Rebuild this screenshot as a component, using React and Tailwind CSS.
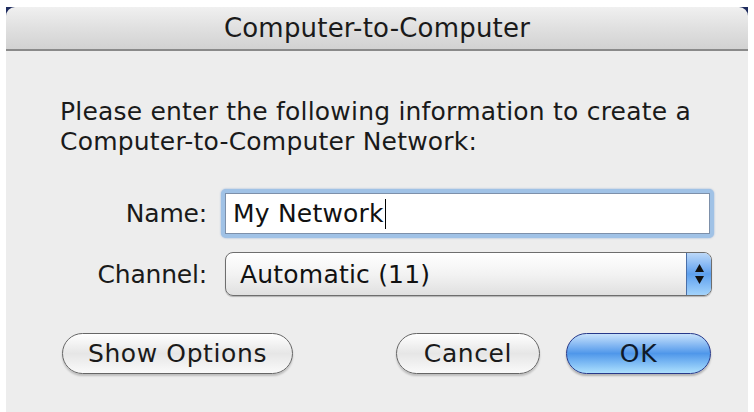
export default function App() {
  const font = { fontFamily: '"DejaVu Sans", "Liberation Sans", sans-serif' };

  return (
    <div className="w-[754px] h-[412px] bg-white overflow-hidden" style={font}>
      <div className="ml-[6px] mt-[7px] w-[742px] h-[405px] bg-[#1d2b5e] flex flex-col">
        {/* title bar */}
        <div className="h-[44px] rounded-t-[9px] bg-gradient-to-b from-[#f0f0f0] via-[#e0e0e0] to-[#d2d2d2] border-b-2 border-[#8a8a8a] flex items-center justify-center">
          <span className="text-[26px] leading-[30px] text-[#1a1a1a] tracking-[0.2px]">Computer-to-Computer</span>
        </div>

        <div className="flex-1 bg-[#ededed] pl-[54px] pt-[46px]">
          <p className="text-[25px] leading-[30px] text-[#1a1a1a] tracking-[0.2px]">
            Please enter the following information to create a
            <br />
            Computer-to-Computer Network:
          </p>

          <div className="mt-[32px] flex items-center">
            <div className="w-[147px] text-right text-[25px] leading-[29px] text-[#1a1a1a] tracking-[-0.2px]">Name:</div>
            <div className="ml-[14px] w-[493px] h-[49px] rounded-[5px] bg-[#a0c2e6] p-[4px] flex shadow-[0_0_2px_rgba(80,130,200,0.6)]">
              <div className="flex-1 bg-white border border-[#7d90aa] flex items-center pl-[7px]">
                <span className="text-[25px] leading-[29px] text-[#111] tracking-[0.2px]">My Network</span>
                <span className="ml-[1px] w-[1px] h-[30px] bg-black" />
              </div>
            </div>
          </div>

          <div className="mt-[14px] flex items-center">
            <div className="w-[147px] text-right text-[25px] leading-[29px] text-[#1a1a1a] tracking-[-0.2px]">Channel:</div>
            <div className="ml-[18px] w-[487px] h-[44px] rounded-[8px] border border-[#6e6e6e] bg-gradient-to-b from-white via-[#f3f3f3] to-[#e0e0e0] flex overflow-hidden shadow-[0_1px_1px_rgba(0,0,0,0.25)]">
              <div className="flex-1 flex items-center pl-[14px] text-[25px] leading-[29px] text-[#111] tracking-[0.2px]">Automatic (11)</div>
              <div className="w-[25px] bg-gradient-to-b from-[#bcd8f8] via-[#5ea0ee] to-[#a3d3fb] border-l border-[#4a6fa8] flex flex-col items-center justify-center gap-[4px]">
                <svg width="9" height="8" viewBox="0 0 9 8"><path d="M4.5 0 L9 8 L0 8 Z" fill="#111" /></svg>
                <svg width="9" height="8" viewBox="0 0 9 8"><path d="M0 0 L9 0 L4.5 8 Z" fill="#111" /></svg>
              </div>
            </div>
          </div>

          <div className="mt-[37px] flex items-center">
            <button className="ml-[2px] w-[231px] h-[41px] rounded-full border border-[#666] bg-gradient-to-b from-white via-[#e6e6e6] to-[#fafafa] text-[25px] leading-[29px] text-[#1a1a1a] tracking-[0.6px] shadow-[0_2px_2px_rgba(0,0,0,0.2)]">
              Show Options
            </button>
            <button className="ml-[103px] w-[144px] h-[41px] rounded-full border border-[#666] bg-gradient-to-b from-white via-[#e6e6e6] to-[#fafafa] text-[25px] leading-[29px] text-[#1a1a1a] tracking-[0.6px] shadow-[0_2px_2px_rgba(0,0,0,0.2)]">
              Cancel
            </button>
            <button className="ml-[26px] w-[145px] h-[41px] rounded-full border border-[#27398a] bg-gradient-to-b from-[#c8e2fb] via-[#4f97ea] to-[#ade0fd] text-[25px] leading-[29px] text-[#0f1a2a] tracking-[0.6px] shadow-[0_2px_2px_rgba(0,0,0,0.25)]">
              OK
            </button>
          </div>
        </div>
      </div>
    </div>
  );
}
